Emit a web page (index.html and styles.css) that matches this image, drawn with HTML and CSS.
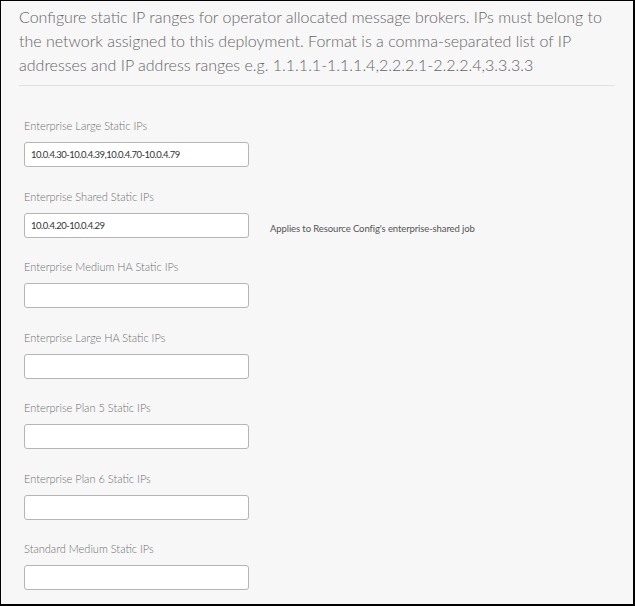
FILE: index.html
```html
<!DOCTYPE html>
<html>
<head>
<meta charset="utf-8">
<link rel="stylesheet" href="styles.css">
</head>
<body>
<div class="page">
  <p class="desc">Configure static IP ranges for operator allocated message brokers. IPs must belong to the network assigned to this deployment. Format is a comma-separated list of IP addresses and IP address ranges e.g. 1.1.1.1-1.1.1.4,2.2.2.1-2.2.2.4,3.3.3.3</p>
  <div class="fields">
    <div class="field">
      <label class="label">Enterprise Large Static IPs</label>
      <div class="row"><input class="input" type="text" value="10.0.4.30-10.0.4.39,10.0.4.70-10.0.4.79"></div>
    </div>
    <div class="field">
      <label class="label">Enterprise Shared Static IPs</label>
      <div class="row"><input class="input" type="text" value="10.0.4.20-10.0.4.29"><span class="help">Applies to Resource Config's enterprise-shared job</span></div>
    </div>
    <div class="field">
      <label class="label">Enterprise Medium HA Static IPs</label>
      <div class="row"><input class="input" type="text" value=""></div>
    </div>
    <div class="field">
      <label class="label">Enterprise Large HA Static IPs</label>
      <div class="row"><input class="input" type="text" value=""></div>
    </div>
    <div class="field">
      <label class="label">Enterprise Plan 5 Static IPs</label>
      <div class="row"><input class="input" type="text" value=""></div>
    </div>
    <div class="field">
      <label class="label">Enterprise Plan 6 Static IPs</label>
      <div class="row"><input class="input" type="text" value=""></div>
    </div>
    <div class="field">
      <label class="label">Standard Medium Static IPs</label>
      <div class="row"><input class="input" type="text" value=""></div>
    </div>
  </div>
</div>
</body>
</html>
```
FILE: styles.css
```css
html, body {
  margin: 0;
  padding: 0;
}
body {
  font-family: Lato, "Open Sans", sans-serif;
  background: #f7f7f7;
}
.page {
  box-sizing: border-box;
  width: 635px;
  height: 606px;
  overflow: hidden;
  background: #f7f7f7;
  border-top: 1px solid #000;
  border-left: 1px solid #000;
  border-right: 2px solid #000;
  border-bottom: 2px solid #000;
  padding: 4px 18px 0 18px;
}
.desc {
  margin: 0;
  font-size: 16px;
  font-weight: 300;
  line-height: 24px;
  color: #666;
  padding-bottom: 8px;
  border-bottom: 1px solid #e0e0e0;
}
.fields {
  padding: 32px 0 0 5px;
}
.field {
  display: flex;
  flex-direction: column;
  margin-bottom: 21.5px;
}
.label {
  font-size: 11px;
  font-weight: 300;
  line-height: 16px;
  color: #707070;
  margin-bottom: 8px;
}
.row {
  display: flex;
  align-items: center;
}
.input {
  box-sizing: border-box;
  width: 225px;
  height: 25px;
  margin: 0;
  border: 1px solid #b5b5b5;
  border-radius: 3px;
  background: #fff;
  padding: 0 6px;
  font-family: Lato, "Open Sans", sans-serif;
  font-size: 9.5px;
  letter-spacing: -0.5px;
  color: #333;
  outline: none;
}
.help {
  margin-left: 21px;
  margin-top: 7px;
  font-size: 9.5px;
  letter-spacing: -0.1px;
  color: #555;
}
```
